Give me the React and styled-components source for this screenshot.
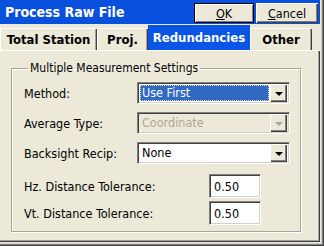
import React from 'react';
import styled, { createGlobalStyle } from 'styled-components';

const GlobalStyle = createGlobalStyle`
  html, body {
    margin: 0;
    padding: 0;
    background: #ece9d8;
  }
  body {
    font-family: "DejaVu Sans Condensed", "DejaVu Sans", sans-serif;
    font-size: 12.5px;
    color: #000;
  }
`;

const Window = styled.div`
  width: 324px;
  height: 246px;
  box-sizing: border-box;
  display: flex;
  flex-direction: column;
  background: #ece9d8;
  padding-right: 4px;
  padding-bottom: 4px;
  box-shadow: inset -1px -1px 0 #404040, inset -2px -2px 0 #808080, inset -3px -3px 0 #d4d0c8;
`;

const TitleBar = styled.div`
  height: 24px;
  flex: none;
  display: flex;
  align-items: center;
  background: #0a50df;
  padding-left: 5px;
  padding-right: 2px;
`;

const Title = styled.div`
  flex: 1;
  color: #fff;
  font-weight: bold;
  font-size: 14px;
`;

const TitleButtons = styled.div`
  display: flex;
  gap: 2px;
  padding-top: 2px;
`;

const Button = styled.button`
  width: ${p => p.$w}px;
  height: 20px;
  box-sizing: border-box;
  padding: 0;
  font-family: inherit;
  font-size: 12.5px;
  color: #000;
  background: #ece9d8;
  border: none;
  box-shadow: ${p => p.$default
    ? 'inset 0 0 0 1px #000, inset 2px 2px 0 #fff, inset -2px -2px 0 #808080'
    : 'inset 1px 1px 0 #fff, inset -1px -1px 0 #404040, inset -2px -2px 0 #808080'};

  u { text-decoration: underline; }
`;

const TabStrip = styled.div`
  height: 26px;
  flex: none;
  display: flex;
  align-items: flex-end;
`;

const Tab = styled.div`
  width: ${p => p.$w}px;
  height: ${p => (p.$active ? 25 : 22)}px;
  box-sizing: border-box;
  display: flex;
  align-items: center;
  justify-content: center;
  font-weight: bold;
  font-size: 13px;
  color: ${p => (p.$active ? '#fff' : '#000')};
  background: ${p => (p.$active ? '#0a55e6' : '#ece9d8')};
  box-shadow: ${p => (p.$active
    ? 'none'
    : 'inset 1px 1px 0 #fff, inset -1px 0 0 #404040, inset -2px 0 0 #a0a0a0')};
`;

const Pane = styled.div`
  flex: 1;
  box-sizing: border-box;
  padding: 11px 0 0 11px;
  box-shadow: inset 0 1px 0 #fff, inset -1px -1px 0 #404040, inset -2px -2px 0 #a0a0a0;
`;

const Group = styled.fieldset`
  width: 290px;
  box-sizing: border-box;
  margin: 0;
  padding: 0 0 6px 12px;
  border: 1px solid #a7a696;
  box-shadow: 1px 1px 0 #fff, inset 1px 1px 0 #fff;
`;

const Legend = styled.legend`
  margin-left: 4px;
  padding: 0 2px;
  font-size: 12px;
  line-height: 15px;
`;

const Rows = styled.div`
  display: flex;
  flex-direction: column;
  gap: ${p => p.$gap}px;
  margin-top: ${p => p.$top}px;
`;

const Row = styled.div`
  display: flex;
  align-items: center;
`;

const Label = styled.div`
  width: ${p => p.$w}px;
  flex: none;
`;

const Sunken = styled.div`
  box-sizing: border-box;
  display: flex;
  align-items: center;
  padding: 2px;
  border-top: 1px solid #808080;
  border-left: 1px solid #808080;
  border-right: 1px solid #fff;
  border-bottom: 1px solid #fff;
  box-shadow: inset 1px 1px 0 #404040, inset -1px -1px 0 #d4d0c8;
`;

const Select = styled(Sunken)`
  width: 153px;
  height: 22px;
  background: ${p => (p.$disabled ? '#ece9d8' : '#fff')};
`;

const Value = styled.div`
  flex: 1;
  height: 16px;
  line-height: 16px;
  padding-left: 2px;
  margin-right: 1px;
  box-sizing: border-box;
  color: ${p => (p.$disabled ? '#aca899' : p.$selected ? '#fff' : '#000')};
  background: ${p => (p.$selected ? '#316ac5' : 'transparent')};
  outline: ${p => (p.$selected ? '1px dotted #e8e0a0' : 'none')};
  outline-offset: -1px;
`;

const DropButton = styled.div`
  width: 17px;
  height: 18px;
  flex: none;
  box-sizing: border-box;
  display: flex;
  align-items: center;
  justify-content: center;
  background: #ece9d8;
  box-shadow: inset 1px 1px 0 #fff, inset -1px -1px 0 #404040, inset -2px -2px 0 #808080;
`;

const Arrow = styled.div`
  width: 0;
  height: 0;
  border-left: 4px solid transparent;
  border-right: 4px solid transparent;
  border-top: 4px solid ${p => (p.$disabled ? '#aca899' : '#000')};
  margin-top: 1px;
`;

const TextBox = styled(Sunken)`
  width: 52px;
  height: 24px;
  background: #fff;
  padding-left: 4px;
`;

const Combo = ({ value, selected, disabled }) => (
  <Select $disabled={disabled}>
    <Value $selected={selected} $disabled={disabled}>{value}</Value>
    <DropButton>
      <Arrow $disabled={disabled} />
    </DropButton>
  </Select>
);

export default function App() {
  return (
    <>
      <GlobalStyle />
      <Window>
        <TitleBar>
          <Title>Process Raw File</Title>
          <TitleButtons>
            <Button $w={60} $default><u>O</u>K</Button>
            <Button $w={62}><u>C</u>ancel</Button>
          </TitleButtons>
        </TitleBar>
        <TabStrip>
          <Tab $w={97}>Total Station</Tab>
          <Tab $w={51}>Proj.</Tab>
          <Tab $w={102} $active>Redundancies</Tab>
          <Tab $w={62}>Other</Tab>
        </TabStrip>
        <Pane>
          <Group>
            <Legend>Multiple Measurement Settings</Legend>
            <Rows $gap={8} $top={6}>
              <Row>
                <Label $w={113}>Method:</Label>
                <Combo value="Use First" selected />
              </Row>
              <Row>
                <Label $w={113}>Average Type:</Label>
                <Combo value="Coordinate" disabled />
              </Row>
              <Row>
                <Label $w={113}>Backsight Recip:</Label>
                <Combo value="None" />
              </Row>
            </Rows>
            <Rows $gap={3} $top={10}>
              <Row>
                <Label $w={185}>Hz. Distance Tolerance:</Label>
                <TextBox>0.50</TextBox>
              </Row>
              <Row>
                <Label $w={185}>Vt. Distance Tolerance:</Label>
                <TextBox>0.50</TextBox>
              </Row>
            </Rows>
          </Group>
        </Pane>
      </Window>
    </>
  );
}
